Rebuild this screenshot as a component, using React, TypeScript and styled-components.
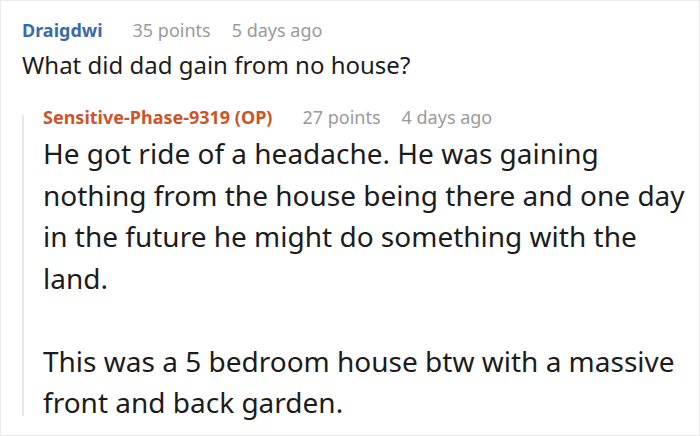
import React from "react";
import styled, { createGlobalStyle } from "styled-components";

const Global = createGlobalStyle`
  html, body { margin: 0; padding: 0; background: #fff; }
  body { font-family: "Noto Sans", "Open Sans", sans-serif; }
`;

const Frame = styled.div`
  box-sizing: border-box;
  width: 700px;
  height: 436px;
  border: 1px solid #ebebeb;
  padding: 16px 2px 0 21px;
  display: flex;
  flex-direction: column;
  overflow: hidden;
`;

const Meta = styled.div`
  display: flex;
  align-items: baseline;
  font-size: 18px;
  line-height: 26px;
`;

const Author = styled.span<{ $op?: boolean }>`
  font-weight: 700;
  color: ${(p) => (p.$op ? "#cc5427" : "#3a6aae")};
  margin-right: 30px;
`;

const Stat = styled.span`
  color: #9a9a9a;
  margin-right: 21px;
`;

const Body = styled.p`
  margin: 4px 0 0 0;
  font-size: 24px;
  line-height: 36px;
  color: #1c1c1c;
`;

const Reply = styled.div`
  display: flex;
  margin-top: 21px;
`;

const ThreadLine = styled.div`
  width: 2px;
  background: #e8e8e8;
  margin: 11px 19px 8px 0;
  flex-shrink: 0;
`;

const ReplyContent = styled.div`
  display: flex;
  flex-direction: column;
  min-width: 0;
`;

const ReplyBody = styled.div`
  font-size: 28px;
  line-height: 41.5px;
  color: #1c1c1c;
  margin-top: 3px;
  p { margin: 0 0 41.5px 0; }
  p:last-child { margin-bottom: 0; }
`;

export default function App() {
  return (
    <>
      <Global />
      <Frame>
        <Meta>
          <Author>Draigdwi</Author>
          <Stat>35 points</Stat>
          <Stat>5 days ago</Stat>
        </Meta>
        <Body>What did dad gain from no house?</Body>
        <Reply>
          <ThreadLine />
          <ReplyContent>
            <Meta>
              <Author $op>Sensitive-Phase-9319 (OP)</Author>
              <Stat>27 points</Stat>
              <Stat>4 days ago</Stat>
            </Meta>
            <ReplyBody>
              <p>
                He got ride of a headache. He was gaining nothing from the house
                being there and one day in the future he might do something with
                the land.
              </p>
              <p>
                This was a 5 bedroom house btw with a massive front and back
                garden.
              </p>
            </ReplyBody>
          </ReplyContent>
        </Reply>
      </Frame>
    </>
  );
}
